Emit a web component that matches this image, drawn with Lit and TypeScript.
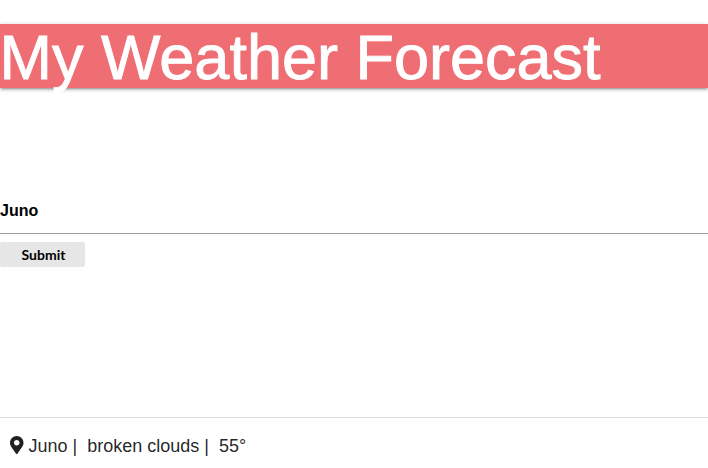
import { LitElement, html, css } from "lit";
import { customElement, state } from "lit/decorators.js";

@customElement("app-root")
export class AppRoot extends LitElement {
  @state() private city = "Juno";

  static styles = css`
    :host { display: flex; flex-direction: column; height: 468px; box-sizing: border-box; padding-top: 24px; overflow: hidden; background: #fff; font-family: "Liberation Sans", Arial, sans-serif; color: rgba(0, 0, 0, 0.87); }
    nav { flex: none; height: 64px; background: #ee6e73; color: #fff; font-size: 63px; line-height: 67px; text-indent: -0.5px; white-space: nowrap; -webkit-text-stroke: 0.9px #fff; box-shadow: 0 2px 2px 0 rgba(0,0,0,.14), 0 3px 1px -2px rgba(0,0,0,.12), 0 1px 5px 0 rgba(0,0,0,.2); }
    form { flex: none; display: flex; flex-direction: column; align-items: flex-start; margin-top: 99px; }
    .city { box-sizing: border-box; width: 100%; height: 47px; border: 0; border-bottom: 1px solid #9e9e9e; outline: 0; padding: 2px 0 0; background: transparent; font: 700 16px "Liberation Sans", sans-serif; color: #000; }
    .submit { width: 85px; height: 25px; margin-top: 8px; border: 0; border-radius: 2px; padding: 0 0 0 2px; background: #e6e6e6; font: 700 14px Lato, sans-serif; color: #000; }
    .weather { flex: none; display: flex; align-items: center; margin-top: 150px; border-top: 1px solid #ddd; height: 56px; padding-left: 10px; font-size: 18px; white-space: pre; }
    .pin { width: 13.5px; height: 18px; margin-right: 5px; margin-top: -2px; }
  `;

  render() {
    return html`
      <nav>My Weather Forecast</nav>
      <form @submit=${(e: Event) => e.preventDefault()}>
        <input class="city" .value=${this.city} />
        <button class="submit">Submit</button>
      </form>
      <div class="weather"><svg class="pin" viewBox="0 0 384 512"><path fill="currentColor" d="M172.268 501.67C26.97 291.031 0 269.413 0 192 0 85.961 85.961 0 192 0s192 85.961 192 192c0 77.413-26.97 99.031-172.268 309.67-9.535 13.774-29.93 13.773-39.464 0zM192 272c44.183 0 80-35.817 80-80s-35.817-80-80-80-80 35.817-80 80 35.817 80 80 80z"/></svg><span>Juno |  broken clouds |  55°</span></div>
    `;
  }
}
